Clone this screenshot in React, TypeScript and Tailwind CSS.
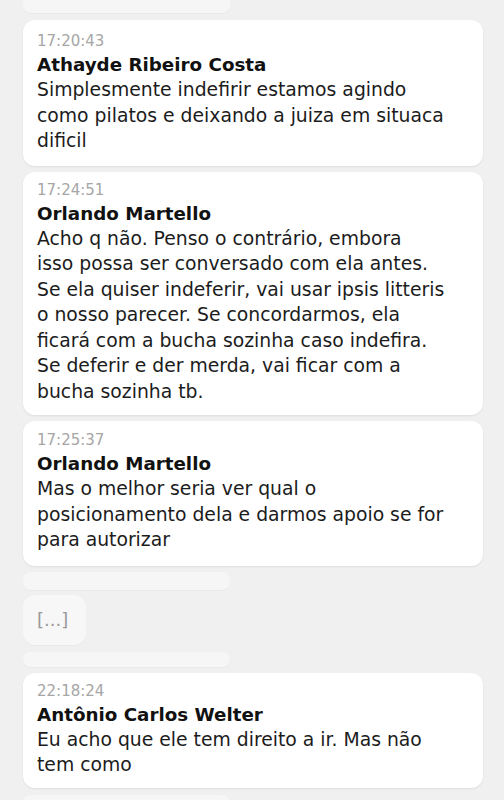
import React from "react";

type Msg = {
  time: string;
  name: string;
  lines: string[];
  pad: string;
};

const msgs1: Msg[] = [
  {
    time: "17:20:43",
    name: "Athayde Ribeiro Costa",
    lines: [
      "Simplesmente indefirir estamos agindo",
      "como pilatos e deixando a juiza em situaca",
      "dificil",
    ],
    pad: "pt-[11px] pb-[12px]",
  },
  {
    time: "17:24:51",
    name: "Orlando Martello",
    lines: [
      "Acho q não. Penso o contrário, embora",
      "isso possa ser conversado com ela antes.",
      "Se ela quiser indeferir, vai usar ipsis litteris",
      "o nosso parecer. Se concordarmos, ela",
      "ficará com a bucha sozinha caso indefira.",
      "Se deferir e der merda, vai ficar com a",
      "bucha sozinha tb.",
    ],
    pad: "pt-[8px] pb-[11px]",
  },
  {
    time: "17:25:37",
    name: "Orlando Martello",
    lines: [
      "Mas o melhor seria ver qual o",
      "posicionamento dela e darmos apoio se for",
      "para autorizar",
    ],
    pad: "pt-[9px] pb-[13px]",
  },
];

const msg4: Msg = {
  time: "22:18:24",
  name: "Antônio Carlos Welter",
  lines: ["Eu acho que ele tem direito a ir. Mas não", "tem como"],
  pad: "pt-[8px] pb-[10px]",
};

function Card({ m }: { m: Msg }) {
  return (
    <div
      className={`w-[460px] rounded-[12px] bg-white pl-[14px] pr-[20px] shadow-[0_1px_2px_rgba(0,0,0,0.08)] ${m.pad}`}
    >
      <div className="text-[15px] leading-[21px] text-[#a6a6a6]">{m.time}</div>
      <div className="text-[18.3px] font-bold leading-[25px] text-[#111111]">{m.name}</div>
      <div className="text-[18.8px] leading-[25.5px] text-[#1c1c1c]">
        {m.lines.map((l, i) => (
          <div key={i} className="whitespace-nowrap">
            {l}
          </div>
        ))}
      </div>
    </div>
  );
}

export default function App() {
  return (
    <div
      className="min-h-screen w-[504px] overflow-hidden bg-[#f0f0f0] pl-[23px]"
      style={{ fontFamily: "'DejaVu Sans', 'Noto Sans', sans-serif" }}
    >
      <div className="flex flex-col">
        <div className="h-[13px] w-[207px] rounded-b-[8px] bg-[#f6f6f6] shadow-[0_1px_1px_rgba(0,0,0,0.03)]" />
        <div className="mt-[7px] flex flex-col gap-[6px]">
          {msgs1.map((m, i) => (
            <Card key={i} m={m} />
          ))}
        </div>
        <div className="mt-[6px] h-[18px] w-[207px] rounded-[8px] bg-[#f6f6f6] shadow-[0_1px_1px_rgba(0,0,0,0.03)]" />
        <div className="mt-[5px] flex h-[50px] w-[63px] items-center rounded-[12px] bg-[#f7f7f7] pl-[14px] shadow-[0_1px_1px_rgba(0,0,0,0.03)]">
          <span className="text-[18px] leading-none text-[#9a9a9a]">[...]</span>
        </div>
        <div className="mt-[7px] h-[15px] w-[207px] rounded-[8px] bg-[#f6f6f6] shadow-[0_1px_1px_rgba(0,0,0,0.03)]" />
        <div className="mt-[6px]">
          <Card m={msg4} />
        </div>
        <div className="mt-[7px] h-[18px] w-[207px] rounded-[8px] bg-[#f6f6f6]" />
      </div>
    </div>
  );
}
